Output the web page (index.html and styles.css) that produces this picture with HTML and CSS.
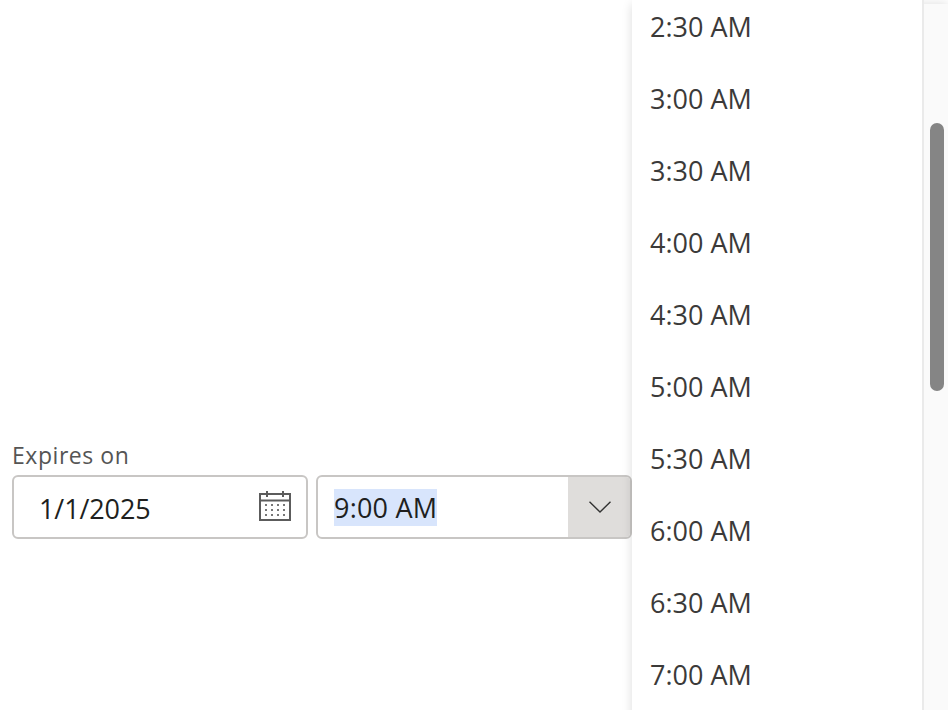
FILE: index.html
```html
<!DOCTYPE html>
<html lang="en">
<head>
<meta charset="utf-8">
<title>Expires on</title>
<link rel="stylesheet" href="styles.css">
</head>
<body>
<main class="form">
  <label class="label">Expires on</label>
  <div class="row">
    <div class="field date">
      <span class="date-text">1/1/2025</span>
      <svg class="cal" width="32" height="30" viewBox="0 0 32 30" fill="none" stroke="#5c5c5c" stroke-width="2">
        <rect x="1" y="3" width="30" height="26"/>
        <path d="M1 9.5H31M8 0V6M24 0V6"/>
        <path d="M6 14h2M12 14h2M18 14h2M24 14h2M6 19h2M12 19h2M18 19h2M24 19h2M6 24h2M12 24h2M18 24h2M24 24h2" stroke="#777"/>
      </svg>
    </div>
    <div class="field time">
      <span class="time-text"><span class="sel">9:00 AM</span></span>
      <span class="caret">
        <svg width="22" height="12" viewBox="0 0 22 12" fill="none" stroke="#333" stroke-width="1.4"><path d="M0.5 0.8L11 11L21.5 0.8"/></svg>
      </span>
    </div>
  </div>
</main>
<div class="menu">
  <div class="list">
    <div class="opt">2:30 AM</div>
    <div class="opt">3:00 AM</div>
    <div class="opt">3:30 AM</div>
    <div class="opt">4:00 AM</div>
    <div class="opt">4:30 AM</div>
    <div class="opt">5:00 AM</div>
    <div class="opt">5:30 AM</div>
    <div class="opt">6:00 AM</div>
    <div class="opt">6:30 AM</div>
    <div class="opt">7:00 AM</div>
  </div>
  <div class="track"><div class="thumb"></div></div>
</div>
</body>
</html>
```
FILE: styles.css
```css
* { box-sizing: border-box; }
html, body { margin: 0; height: 100%; overflow: hidden; background: #fff; }
body { font-family: "Open Sans", "Noto Sans", sans-serif; position: relative; }
.form { padding: 441px 0 0 12px; width: 632px; }
.label { display: block; font-size: 23px; line-height: 28px; color: #555; letter-spacing: 0.55px; }
.row { display: flex; gap: 8px; margin-top: 6px; }
.field { height: 64px; border: 2px solid #c8c6c4; border-radius: 6px; display: flex; align-items: center; font-size: 27px; color: #201f1e; overflow: hidden; }
.date { width: 296px; padding: 0 15px 0 25px; justify-content: space-between; }
.date-text { padding-top: 2px; letter-spacing: -0.1px; }
.time { width: 316px; padding-left: 16px; justify-content: space-between; }
.sel { background: #d8e5fc; display: inline-block; height: 37px; line-height: 38px; letter-spacing: 0.2px; }
.cal { display: block; margin-top: -2px; }
.caret { width: 62px; height: 100%; padding-left: 2px; background: #dfdddb; display: flex; align-items: center; justify-content: center; }
.menu { position: absolute; left: 632px; top: 4px; width: 316px; height: 720px; display: flex; background: #fafafa; box-shadow: 0 0 10px rgba(0,0,0,.14); }
.list { width: 292px; background: #fff; border-right: 2px solid #eaeaea; margin-top: -13px; }
.opt { height: 72px; padding-left: 18px; line-height: 72px; font-size: 27px; color: #3b3a39; }
.track { flex: 1; position: relative; }
.thumb { position: absolute; left: 6px; top: 119px; width: 14px; height: 268px; border-radius: 7px; background: #858585; }
```
